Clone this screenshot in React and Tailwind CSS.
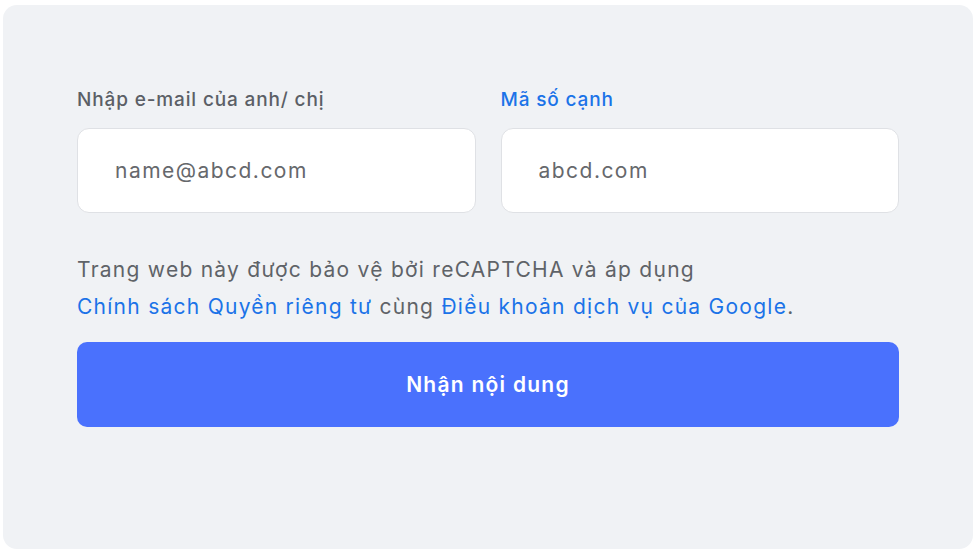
import React from 'react'

export default function App(){
  const [email, setEmail] = React.useState('')
  const [domain, setDomain] = React.useState('')

  return (
    <div className="w-[976px] h-[553px] bg-white pt-[5px] pl-[3px]" style={{ fontFamily: 'Inter, "Noto Sans", sans-serif' }}>
      <div className="w-[970px] h-[544px] bg-[#f0f2f5] rounded-[14px] px-[74px] pt-[83px]">
        <div className="grid grid-cols-2 gap-[25px]">
          <div>
            <label className="block text-[19px] leading-[24px] tracking-[0.045em] font-medium text-[#5b5f66] mb-[16px]">Nhập e-mail của anh/ chị</label>
            <input
              value={email}
              onChange={e=>setEmail(e.target.value)}
              placeholder="name@abcd.com"
              className="w-full h-[85px] bg-white rounded-[12px] border border-[#dfe1e5] px-[37px] text-[21px] tracking-[0.07em] text-[#333] placeholder:text-[#66686c] outline-none"
            />
          </div>
          <div>
            <label className="block text-[19px] leading-[24px] tracking-[0.045em] font-medium text-[#1b73e8] mb-[16px]">Mã số cạnh</label>
            <input
              value={domain}
              onChange={e=>setDomain(e.target.value)}
              placeholder="abcd.com"
              className="w-full h-[85px] bg-white rounded-[12px] border border-[#dfe1e5] px-[37px] text-[21px] tracking-[0.07em] text-[#333] placeholder:text-[#66686c] outline-none"
            />
          </div>
        </div>

        <p className="mt-[38px] text-[21px] leading-[37px] tracking-[0.06em] text-[#5f6368]">
          Trang web này được bảo vệ bởi reCAPTCHA và áp dụng<br />
          <a href="#" className="text-[#1b73e8]">Chính sách Quyền riêng tư</a> cùng <a href="#" className="text-[#1b73e8]">Điều khoản dịch vụ của Google</a>.
        </p>

        <button className="mt-[17px] w-full h-[85px] bg-[#4a71fd] rounded-[10px] text-white text-[21px] tracking-[0.06em] font-semibold">
          Nhận nội dung
        </button>
      </div>
    </div>
  )
}
